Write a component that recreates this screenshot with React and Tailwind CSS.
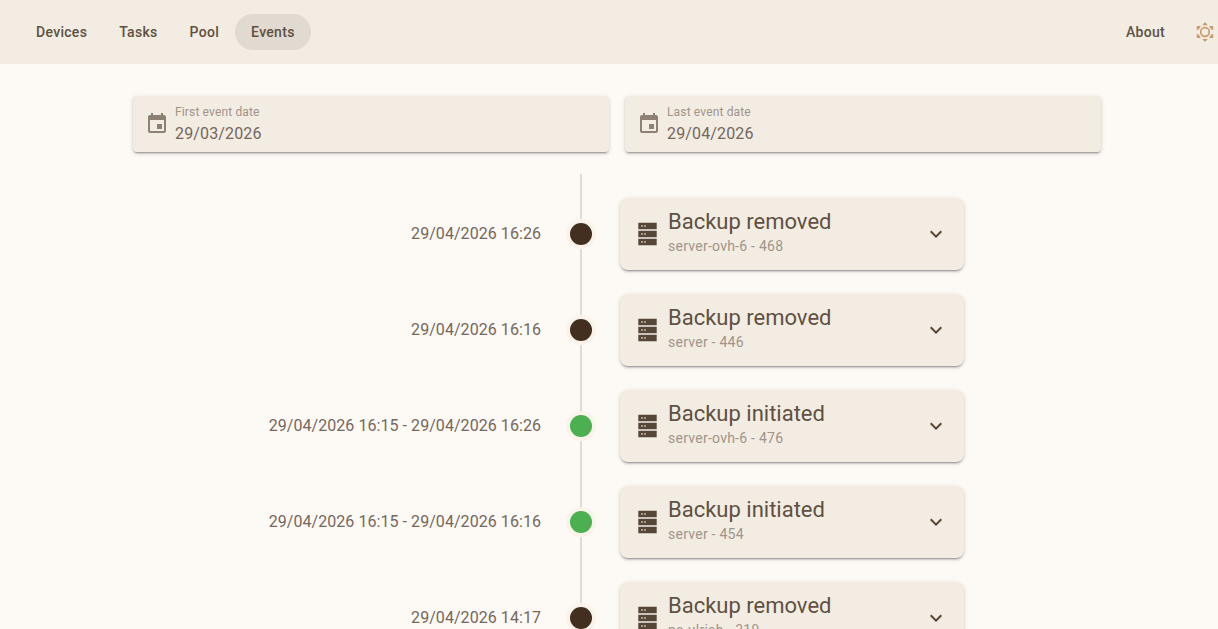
const EVENTS = [
  { time: "29/04/2026 16:26", title: "Backup removed", sub: "server-ovh-6 - 468", color: "bg-[#432f1f]" },
  { time: "29/04/2026 16:16", title: "Backup removed", sub: "server - 446", color: "bg-[#432f1f]" },
  { time: "29/04/2026 16:15 - 29/04/2026 16:26", title: "Backup initiated", sub: "server-ovh-6 - 476", color: "bg-[#4caf50]" },
  { time: "29/04/2026 16:15 - 29/04/2026 16:16", title: "Backup initiated", sub: "server - 454", color: "bg-[#4caf50]" },
  { time: "29/04/2026 14:17", title: "Backup removed", sub: "pc-ulrich - 319", color: "bg-[#432f1f]" },
];

function Icon({ d, className }) {
  return (
    <svg viewBox="0 0 24 24" fill="currentColor" className={className}>
      <path d={d} />
    </svg>
  );
}

function ServerIcon({ className }) {
  const row = (y) =>
    `M2.3 ${y}h18.4v6.4H2.3zM5 ${y + 2.6}v1.2h2v-1.2zM8 ${y + 2.6}v1.2h2v-1.2z`;
  return (
    <svg viewBox="0 0 24 24" fill="currentColor" className={className}>
      <path fillRule="evenodd" d={`${row(0.8)}${row(8.8)}${row(16.8)}`} />
    </svg>
  );
}

function SunIcon({ className }) {
  return (
    <svg viewBox="0 0 24 24" fill="currentColor" className={className}>
      <circle cx="12" cy="12" r="4.7" fill="none" stroke="currentColor" strokeWidth="1.8" />
      <path d="M12 1l3 3.5H9zM12 23l3-3.5H9z" />
      <path d="M3 5.5h4.5L5 9.5H3zM21 5.5h-4.5L19 9.5h2zM3 18.5h4.5L5 14.5H3zM21 18.5h-4.5l2.5-4h2z" />
    </svg>
  );
}

const EVENT_ICON = "M17 12h-5v5h5v-5zM16 1v2H8V1H6v2H5c-1.11 0-1.99.9-1.99 2L3 19c0 1.1.89 2 2 2h14c1.1 0 2-.9 2-2V5c0-1.1-.9-2-2-2h-1V1h-2zm3 18H5V8h14v11z";
const EXPAND = "M16.59 8.59 12 13.17 7.41 8.59 6 10l6 6 6-6z";

const cardShadow = "shadow-[0_3px_1px_-2px_rgba(0,0,0,0.2),0_2px_2px_0_rgba(0,0,0,0.14),0_1px_5px_0_rgba(0,0,0,0.12)]";

function NavItem({ label, active }) {
  return (
    <div className={`h-9 px-4 flex items-center rounded-full text-sm font-medium tracking-[0.3px] text-[#5f5042] ${active ? "bg-[#e1dad0]" : ""}`}>
      {label}
    </div>
  );
}

function DateField({ label, value }) {
  return (
    <div className={`flex-1 h-14 flex items-center pl-3 rounded bg-[#f3ece3] ${cardShadow}`}>
      <Icon d={EVENT_ICON} className="w-6 h-6 text-[#8e8074]" />
      <div className="ml-[6px] flex flex-col gap-[2px] pt-[2px]">
        <span className="text-xs leading-4 text-[#a0948a] tracking-[0.15px]">{label}</span>
        <span className="text-base leading-6 text-[#75675b] tracking-[0.15px]">{value}</span>
      </div>
    </div>
  );
}

function Line() {
  return <div className="flex-1 w-[2px] bg-[#dfdad3]" />;
}

function Row({ e }) {
  return (
    <div className="flex h-24 shrink-0">
      <div className="w-[437px] shrink-0 flex items-center justify-end pr-[29px] text-base text-[#75675b] tracking-[0.06px]">
        {e.time}
      </div>
      <div className="w-[22px] flex flex-col items-center shrink-0">
        <Line />
        <div className={`w-[22px] h-[22px] rounded-full ${e.color} ring-4 ring-[#f9f3ea] shrink-0 my-1`} />
        <Line />
      </div>
      <div className="w-[437px] shrink-0 flex items-center pl-[28px]">
        <div className={`w-[344px] h-[72px] flex items-center px-4 rounded-lg bg-[#f3ece3] ${cardShadow}`}>
          <ServerIcon className="w-6 h-6 text-[#564638] shrink-0" />
          <div className="ml-2 flex-1 flex flex-col pb-1">
            <span className="text-[22px] leading-7 text-[#5f5042]">{e.title}</span>
            <span className="text-sm leading-5 text-[#a0948a] tracking-[0.25px]">{e.sub}</span>
          </div>
          <Icon d={EXPAND} className="w-6 h-6 text-[#564638] shrink-0" />
        </div>
      </div>
    </div>
  );
}

export default function App() {
  return (
    <div className="h-screen overflow-hidden bg-[#fdfaf6] font-['Roboto',sans-serif]">
      <header className="h-16 bg-[#f3ece3] flex items-center pl-5">
        <nav className="flex items-center">
          <NavItem label="Devices" />
          <NavItem label="Tasks" />
          <NavItem label="Pool" />
          <NavItem label="Events" active />
        </nav>
        <div className="ml-auto flex items-center">
          <NavItem label="About" />
          <SunIcon className="w-[22px] h-[22px] ml-[13px] mr-[2px] text-[#c89b6b]" />
        </div>
      </header>
      <main className="pt-8 px-[133px]">
        <div className="flex gap-4 w-[968px]">
          <DateField label="First event date" value="29/03/2026" />
          <DateField label="Last event date" value="29/04/2026" />
        </div>
        <div className="mt-[22px] flex flex-col w-[896px]">
          <div className="h-3 flex flex-col items-center">
            <Line />
          </div>
          {EVENTS.map((e, i) => (
            <Row key={i} e={e} />
          ))}
        </div>
      </main>
    </div>
  );
}
